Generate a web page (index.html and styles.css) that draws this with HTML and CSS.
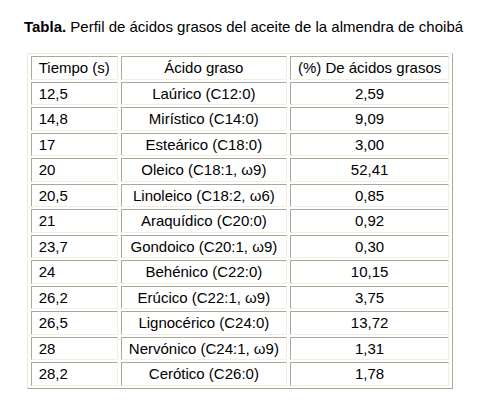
FILE: index.html
```html
<!DOCTYPE html>
<html lang="es">
<head>
<meta charset="utf-8">
<title>Tabla</title>
<link rel="stylesheet" href="styles.css">
</head>
<body>
<div class="wrap">
  <p class="title"><b>Tabla.</b> Perfil de ácidos grasos del aceite de la almendra de choibá</p>
  <table class="data">
    <tr><td class="c1">Tiempo (s)</td><td class="c2">Ácido graso</td><td class="c3">(%) De ácidos grasos</td></tr>
    <tr><td class="c1">12,5</td><td class="c2">Laúrico (C12:0)</td><td class="c3">2,59</td></tr>
    <tr><td class="c1">14,8</td><td class="c2">Mirístico (C14:0)</td><td class="c3">9,09</td></tr>
    <tr><td class="c1">17</td><td class="c2">Esteárico (C18:0)</td><td class="c3">3,00</td></tr>
    <tr><td class="c1">20</td><td class="c2">Oleico (C18:1, ω9)</td><td class="c3">52,41</td></tr>
    <tr><td class="c1">20,5</td><td class="c2">Linoleico (C18:2, ω6)</td><td class="c3">0,85</td></tr>
    <tr><td class="c1">21</td><td class="c2">Araquídico (C20:0)</td><td class="c3">0,92</td></tr>
    <tr><td class="c1">23,7</td><td class="c2">Gondoico (C20:1, ω9)</td><td class="c3">0,30</td></tr>
    <tr><td class="c1">24</td><td class="c2">Behénico (C22:0)</td><td class="c3">10,15</td></tr>
    <tr><td class="c1">26,2</td><td class="c2">Erúcico (C22:1, ω9)</td><td class="c3">3,75</td></tr>
    <tr><td class="c1">26,5</td><td class="c2">Lignocérico (C24:0)</td><td class="c3">13,72</td></tr>
    <tr><td class="c1">28</td><td class="c2">Nervónico (C24:1, ω9)</td><td class="c3">1,31</td></tr>
    <tr><td class="c1">28,2</td><td class="c2">Cerótico (C26:0)</td><td class="c3">1,78</td></tr>
  </table>
</div>
</body>
</html>
```
FILE: styles.css
```css
html, body {
  margin: 0;
  padding: 0;
  background: #ffffff;
}
body {
  font-family: "Liberation Sans", Arial, sans-serif;
  font-size: 15px;
  color: #000000;
}
.wrap {
  display: flex;
  flex-direction: column;
  align-items: center;
  padding-top: 18px;
  padding-left: 2px;
}
.title {
  margin: 0 0 18px 0;
  line-height: 17px;
  white-space: nowrap;
}
.title b {
  font-weight: bold;
}
.data {
  border-collapse: separate;
  border-spacing: 3px 2px;
  border-style: solid;
  border-width: 1px;
  border-color: #ece9d8 #aca899 #aca899 #ece9d8;
  margin-left: -7px;
}
.data td {
  border-style: solid;
  border-width: 1px;
  border-color: #aca899 #f1efe2 #f1efe2 #aca899;
  padding: 2px 7px;
  line-height: 17.5px;
  white-space: nowrap;
}
.c1 {
  width: 70px;
  text-align: left;
}
.c2 {
  width: 147px;
  text-align: center;
}
.c3 {
  width: 141px;
  text-align: center;
}
```
